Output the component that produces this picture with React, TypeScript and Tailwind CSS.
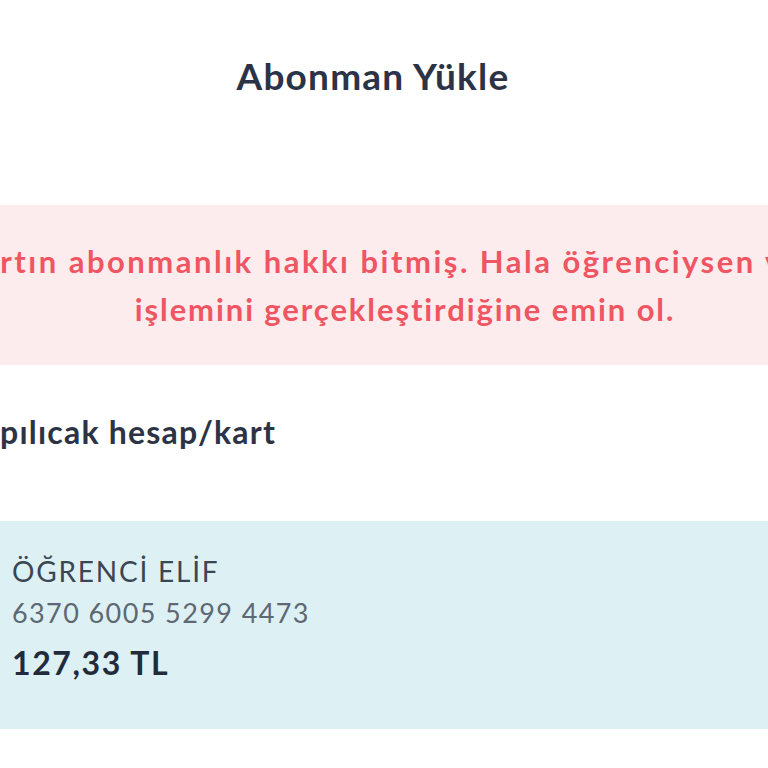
import React from 'react';

const font = { fontFamily: '"Lato", "Noto Sans", sans-serif' };

const App: React.FC = () => {
  return (
    <div className="w-[768px] h-[768px] overflow-hidden bg-white" style={font}>
      <div className="flex flex-col">
        {/* Header */}
        <div className="pt-[53px] pr-[22px] text-center text-[37px] leading-[46px] font-bold text-[#2d3346] tracking-[1.2px]">
          Abonman Yükle
        </div>

        {/* Warning */}
        <div className="mt-[106px] h-[160px] bg-[#fdecee] flex items-center overflow-hidden">
          <div className="w-[1200px] shrink-0 ml-[-195px] flex flex-col items-center text-[31px] leading-[48px] font-bold text-[#ef5662] tracking-[1.9px] whitespace-nowrap">
            <span className="mr-[22px] tracking-[2.5px]">Kartın abonmanlık hakkı bitmiş. Hala öğrenciysen vize</span>
            <span>işlemini gerçekleştirdiğine emin ol.</span>
          </div>
        </div>

        {/* Section label */}
        <div className="mt-[46px] w-[276px] flex justify-end">
          <span className="shrink-0 whitespace-nowrap text-[32px] leading-[42px] font-bold text-[#2c3344] tracking-[1.2px]">
            Yükleme yapılıcak hesap/kart
          </span>
        </div>

        {/* Card */}
        <div className="mt-[68px] h-[208px] bg-[#ddf1f4] pl-[12px] pt-[31px] flex flex-col">
          <span className="text-[28px] leading-[38px] text-[#3b4653] tracking-[1.8px]">ÖĞRENCİ ELİF</span>
          <span className="mt-[5px] text-[27px] leading-[36px] text-[#5d6873] tracking-[1.4px]">6370 6005 5299 4473</span>
          <span className="mt-[12px] text-[32px] leading-[40px] font-bold text-[#222b3b] tracking-[1.6px]">127,33 TL</span>
        </div>
      </div>
    </div>
  );
};

export default App;
